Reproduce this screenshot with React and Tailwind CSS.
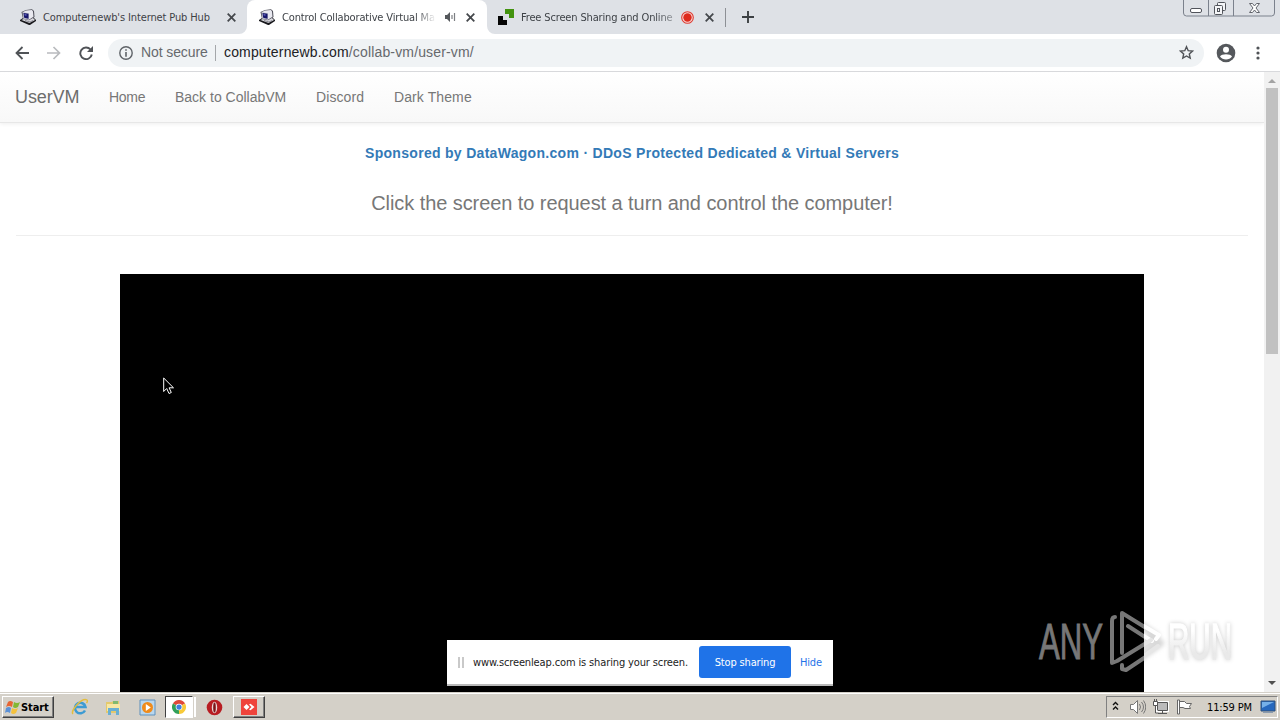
import React from "react";

const ui = "font-['DejaVu_Sans_Condensed','DejaVu_Sans',sans-serif]";

function PcIcon() {
  return (
    <svg className="h-4 w-4 shrink-0" viewBox="0 0 16 16">
      <path d="m0 11 3-2 10-1 3 3v1l-6 4h-1l-9-4Z" fill="#18181c" />
      <path d="m1.500 11 3-1.500L13 9l2 2-5.500 3Z" fill="#d9d9df" />
      <path d="m5 11.500 5 1.500 3-1.500" fill="none" stroke="#75757e" strokeWidth=".8" />
      <path d="M1.500 3 6 1l6-.8 2 1.800.5 6L9 11.300 3 10Z" fill="#4a4a55" />
      <path d="M2.500 3.200 6 1.500 12 1l1 1.500.5 5.200-4.300 2.800Z" fill="#e9e9f0" />
      <path d="m2.500 3.200 6.500 1V11L3.300 9.700Z" fill="#babac6" />
      <path d="m3.500 4 5 .8v5l-4.300-1Z" fill="#17176b" />
      <path d="m4.500 5 2 .3v1.500l-1.800-.3Z" fill="#6061bd" />
    </svg>
  );
}

function Close() {
  return (
    <svg className="h-[9px] w-[9px] shrink-0" viewBox="0 0 9 9" stroke="#45484c" strokeWidth="1.8">
      <path d="M.7.7 8.3 8.3M8.3.7.7 8.3" />
    </svg>
  );
}

function TabStrip() {
  return (
    <div className={`flex h-[34px] bg-[#dee1e6] text-[11px] text-[#3e4247] ${ui}`}>
      <div className="flex w-[247px] items-center pl-5">
        <PcIcon />
        <span className="mt-[2px] ml-[7px] w-[184px] whitespace-nowrap tracking-[-0.12px]">Computernewb's Internet Pub Hub</span>
        <Close />
      </div>
      <div className="relative flex w-[240px] items-center rounded-t-lg bg-white pl-3">
        <svg className="absolute bottom-0 -left-2 h-2 w-2" viewBox="0 0 8 8"><path d="M8 0v8H0a8 8 0 0 0 8-8" fill="#fff" /></svg>
        <svg className="absolute -right-2 bottom-0 h-2 w-2" viewBox="0 0 8 8"><path d="M0 0v8h8a8 8 0 0 1-8-8" fill="#fff" /></svg>
        <PcIcon />
        <span className="mt-[2px] ml-[7px] w-[154px] whitespace-nowrap tracking-[-0.15px] [mask-image:linear-gradient(to_right,#000_134px,transparent)]">Control Collaborative Virtual Ma</span>
        <svg className="ml-[9px] h-[10px] w-[11px]" viewBox="0 0 11 10">
          <path d="M0 3h2l3-3v10L2 7H0Z" fill="#55585c" />
          <path d="M7 3v4M9.500 1v8" stroke="#7c7f83" strokeWidth="1.200" />
        </svg>
        <span className="ml-[10px] flex"><Close /></span>
      </div>
      <div className="flex w-[240px] items-center pl-[11px]">
        <svg className="h-4 w-4" viewBox="0 0 16 16" shapeRendering="crispEdges">
          <path d="M7 0h9v9h-5V5H7Z" fill="#43930f" />
          <path d="M0 7h5v4h4v5H0Z" fill="#050505" />
        </svg>
        <span className="mt-[2px] ml-[7px] w-[154px] whitespace-nowrap tracking-[-0.15px] [mask-image:linear-gradient(to_right,#000_134px,transparent_165px)]">Free Screen Sharing and Online</span>
        <svg className="ml-[6px] h-[13px] w-[13px]" viewBox="0 0 13 13">
          <circle cx="6.5" cy="6.5" r="5.8" fill="#f8dddd" stroke="#de3b30" strokeWidth="1.1" />
          <circle cx="6.5" cy="6.5" r="4.2" fill="#de2a1c" />
        </svg>
        <span className="ml-[11px] flex"><Close /></span>
        <span className="ml-[11px] h-[19px] w-px bg-[#8d9095]" />
      </div>
      <svg className="mt-[11px] ml-[15px] h-3 w-3" viewBox="0 0 12 12"><path d="M6 0v12M0 6h12" stroke="#3c4043" strokeWidth="1.9" /></svg>
      <svg className="mr-[4px] ml-auto h-[17px] w-[94px]" viewBox="0 0 94 17" fill="none" stroke="#7b818c">
        <path d="M1.500-2v15a3 3 0 0 0 3 3h85a3 3 0 0 0 3-3V-2M26.500 0v16M51.500 0v16" />
        <rect x="8.500" y="8.500" width="11" height="4" rx="1.500" fill="#fff" stroke="#51545b" />
        <rect x="35.500" y="2.500" width="8" height="8" rx="1" fill="#f4f5f7" stroke="#51545b" />
        <rect x="32.500" y="5.500" width="8" height="9" rx="1" fill="#f4f5f7" stroke="#51545b" />
        <rect x="35.500" y="8.500" width="2" height="3" stroke="#51545b" />
        <path d="M67.500 3.500h3l2 2.500 2-2.500h3l-3.500 4.500 3.500 4.500h-3l-2-2.500-2 2.500h-3l3.500-4.500Z" fill="#fff" stroke="#62656c" />
      </svg>
    </div>
  );
}

function Toolbar() {
  return (
    <div className="flex h-[38px] items-center border-b border-[#d8d9dc] bg-white">
      <svg className="ml-[15px] h-[14px] w-[14px]" viewBox="0 0 14 14" fill="none" stroke="#505357" strokeWidth="1.8"><path d="M14 7H1.500M7.500 1 1.500 7l6 6" /></svg>
      <svg className="ml-[18px] h-[14px] w-[14px]" viewBox="0 0 14 14" fill="none" stroke="#b9bbbe" strokeWidth="1.7"><path d="M0 7h12.500M6.500 1l6 6-6 6" /></svg>
      <svg className="ml-[18px] h-[14px] w-[14px]" viewBox="0 0 14 14"><path d="M11.500 3.500A5.800 5.800 0 1 0 12.800 8.500" fill="none" stroke="#505357" strokeWidth="1.9" /><path d="M14 0v6H8Z" fill="#505357" /></svg>
      <div className="ml-[15px] flex h-7 w-[1096px] items-center rounded-full bg-[#f0f3f5] pl-[11px] font-['Liberation_Sans',Arial,sans-serif] text-[14px] text-[#66696d]">
        <svg className="h-[14px] w-[14px]" viewBox="0 0 14 14"><circle cx="7" cy="7" r="6.200" fill="none" stroke="#5f6368" strokeWidth="1.400" /><path d="M6.200 3.200h1.600v1.600H6.200zM6.200 6h1.600v4.800H6.200z" fill="#5f6368" /></svg>
        <span className="ml-[8px] w-[74px] whitespace-nowrap tracking-[-0.1px]">Not secure</span>
        <span className="h-[16px] w-px bg-[#a4a7aa]" />
        <span className="ml-[8px] whitespace-nowrap tracking-[0.16px]"><span className="text-[#202124]">computernewb.com</span>/collab-vm/user-vm/</span>
        <svg className="mr-[10px] ml-auto h-[15px] w-[15px]" viewBox="0 0 15 15"><path d="m7.500 1.700 1.700 4 4.300.4-3.200 2.900.9 4.200-3.700-2.200-3.700 2.200.9-4.200L1.500 6.100l4.300-.4Z" fill="none" stroke="#505357" strokeWidth="1.400" /></svg>
      </div>
      <svg className="ml-[12px] h-5 w-5" viewBox="0 0 20 20"><circle cx="10" cy="10" r="9.300" fill="#55585c" /><circle cx="10" cy="6.700" r="3" fill="#fff" /><path d="M4 13.500c1.500-3 10.500-3 12 0-2.500 4-9.500 4-12 0" fill="#fff" /></svg>
      <svg className="ml-[20px] h-[14px] w-[4px]" viewBox="0 0 4 14" fill="#505357"><circle cx="2" cy="2" r="1.600" /><circle cx="2" cy="7" r="1.600" /><circle cx="2" cy="12" r="1.600" /></svg>
    </div>
  );
}

function Page() {
  return (
    <div className="flex h-[620px]">
      <main className="flex w-[1264px] flex-col overflow-hidden bg-white font-['Liberation_Sans',Arial,sans-serif]">
        <nav className="flex h-[51px] shrink-0 items-center border-b border-[#e7e7e7] bg-linear-to-b from-white to-[#f8f8f8] pl-[15px] text-[14px] whitespace-nowrap text-[#777] shadow-[0_1px_4px_rgba(0,0,0,0.07)]">
          <span className="w-[94px] text-[18px] tracking-[-0.1px] text-[#6d6d6d]">UserVM</span>
          <span className="w-[66px] tracking-[-0.3px]">Home</span>
          <span className="w-[141px]">Back to CollabVM</span>
          <span className="w-[78px] tracking-[0.1px]">Discord</span>
          <span className="tracking-[0.1px]">Dark Theme</span>
        </nav>
        <div className="mt-[20px] h-5 text-center text-[14px] leading-5 font-bold tracking-[0.3px] text-[#337ab7]">Sponsored by DataWagon.com · DDoS Protected Dedicated &amp; Virtual Servers</div>
        <h1 className="mt-[28px] h-6 text-center text-[20px] leading-6 tracking-[-0.07px] text-[#777]">Click the screen to request a turn and control the computer!</h1>
        <div className="mx-[16px] mt-[20px] h-px shrink-0 bg-[#eee]" />
        <div className="mx-auto mt-[38px] h-[418px] w-[1024px] shrink-0 bg-black" />
      </main>
      <div className="flex w-4 flex-col items-center bg-[#f1f1f1]">
        <svg className="h-4 w-4 shrink-0" viewBox="0 0 16 16"><path d="M4 11h8L8 7Z" fill="#a3a3a3" /></svg>
        <div className="h-[266px] w-3 bg-[#c1c1c1]" />
        <svg className="mt-auto h-[17px] w-4 shrink-0" viewBox="0 0 16 17"><path d="M4 6h8l-4 4Z" fill="#505050" /></svg>
      </div>
    </div>
  );
}

function Taskbar() {
  return (
    <div className={`flex h-7 items-center border-t border-[#d4d0c8] bg-[#d4d0c8] pt-px shadow-[inset_0_1px_0_#fff] ${ui}`}>
      <div className="ml-[2px] flex h-[22px] w-[52px] items-center border border-t-white border-r-[#404040] border-b-[#404040] border-l-white pl-[2px] shadow-[inset_-1px_-1px_0_#808080]">
        <svg className="h-[15px] w-[15px]" viewBox="0 0 15 15">
          <path d="M3 2q2-2 5 0L7 7Q4 5 1 7Z" fill="#e76533" />
          <path d="M9 2q3 2 6 0l-2 5q-3 2-5 0Z" fill="#83b834" />
          <path d="M1 8q3-2 5 0l-1 5q-3-2-5 0Z" fill="#5b91d7" />
          <path d="M7 8q3 2 6 0l-2 5q-3 2-5 0Z" fill="#f4c13c" />
        </svg>
        <span className="mt-[2px] ml-[1px] text-[11px] font-bold tracking-[-0.1px] text-black">Start</span>
      </div>
      <svg className="ml-[17px] h-[18px] w-[18px]" viewBox="0 0 18 18">
        <path d="M14 12.500A5.300 5.300 0 1 1 14.500 9H4.500" fill="none" stroke="#3d9bd3" strokeWidth="2.500" />
        <path d="M2 16C-1 13 11-1 16 2q1 1-.5 3" fill="none" stroke="#e3bd3e" strokeWidth="1.400" />
      </svg>
      <svg className="ml-[16px] h-[17px] w-[17px]" viewBox="0 0 17 17">
        <path d="M1 3h6l1-1h6v12H1Z" fill="#e3c96d" /><path d="M2 5h13v7H2Z" fill="#f7e7a4" /><path d="M3 16V9h11v7h-3v-4H6v4Z" fill="#69afd3" /><path d="M8 2h5v3H8z" fill="#81b970" />
      </svg>
      <svg className="ml-[17px] h-[17px] w-[17px]" viewBox="0 0 17 17">
        <path d="M1 1h15v15H1Z" fill="#b9d7ee" stroke="#5f91bd" /><circle cx="8.500" cy="8.500" r="5.500" fill="#ef8b1b" /><path d="m6.800 5 5 3.500-5 3.500Z" fill="#fff" />
      </svg>
      <div className="ml-[9px] flex h-[22px] w-[28px] items-center justify-center border border-t-[#404040] border-r-white border-b-white border-l-[#404040] bg-white">
        <svg className="h-[14px] w-[14px]" viewBox="0 0 16 16">
          <path d="M8 8 1.070 4A8 8 0 0 1 14.930 4Z" fill="#df4939" /><path d="M8 8 14.930 4A8 8 0 0 1 8 16Z" fill="#f8ca38" /><path d="M8 8v8A8 8 0 0 1 1.070 4Z" fill="#32a05a" /><circle cx="8" cy="8" r="3.800" fill="#fff" /><circle cx="8" cy="8" r="3" fill="#3f7edf" />
        </svg>
      </div>
      <span className="ml-px h-5 w-[2px] bg-white" />
      <svg className="ml-[10px] h-[17px] w-[17px]" viewBox="0 0 17 17"><circle cx="8.500" cy="8.500" r="7.800" fill="#b81d22" /><ellipse cx="8.500" cy="8.500" rx="2.700" ry="5.800" fill="#e9d8d8" /><ellipse cx="8.500" cy="8.500" rx="1.300" ry="5" fill="#7c1417" /></svg>
      <div className="ml-[10px] flex h-[22px] w-[32px] items-center justify-center border border-t-white border-r-[#404040] border-b-[#404040] border-l-white shadow-[inset_-1px_-1px_0_#808080]">
        <svg className="h-4 w-4" viewBox="0 0 16 16"><path d="M0 0h16v16H0Z" fill="#ef443b" /><path d="m5.500 5 3 3-3 3-3-3Z" fill="#fff" /><path d="m8 5.500 1.500-.8L13.500 8l-4 3.300L8 10.500 10.500 8Z" fill="#fff" /></svg>
      </div>
      <div className="mr-[2px] ml-auto flex h-[22px] w-[172px] items-center border border-t-[#808080] border-r-white border-b-white border-l-[#808080] pl-[5px]">
        <svg className="-mt-[2px] h-[10px] w-[7px]" viewBox="0 0 7 10" fill="none" stroke="#111" strokeWidth="1.400"><path d="m1 4 2.500-2.500L6 4M1 8.500 3.500 6 6 8.500" /></svg>
        <svg className="ml-[10px] h-[16px] w-[17px]" viewBox="0 0 17 16" fill="none" stroke="#777"><path d="M1.500 5.500h3l4-4v13l-4-4h-3Z" fill="#fff" /><path d="M10.500 5q2 3 0 6M12.500 3q4 5 0 10M14.500 1.500q4.500 6.500 0 13" /></svg>
        <svg className="ml-[6px] h-[16px] w-[17px]" viewBox="0 0 17 16" fill="none" stroke="#555"><path d="M5.500 3.500h10v8h-10Z" fill="#b5b5b5" stroke="#fff" strokeWidth="3" /><path d="M5.500 3.500h10v8h-10ZM6 14.500h9M10.500 12v2" fill="#bbb" /><path d="M1.500 2.500h4v4h-4ZM2.500 0v2M4.500 0v2M3.500 7v7h3" fill="#fff" /></svg>
        <svg className="ml-[7px] h-[16px] w-[17px]" viewBox="0 0 17 16" fill="#fff" stroke="#666"><path d="M1.500 1v14h2V1ZM3.500 2.500h5l2 2h5l-2 3 1 2H9l-2-1H3.500Z" /></svg>
        <span className="mt-[2px] ml-[14px] w-[46px] text-[11px] tracking-[-0.15px] whitespace-nowrap text-black">11:59 PM</span>
        <svg className="ml-[7px] h-[14px] w-[16px]" viewBox="0 0 16 14"><path d="M1 1h14v10H1Z" fill="#2768bd" stroke="#315179" /><path d="M2 2h12L2 8Z" fill="#76b0e8" /><path d="M3 12h10v1H3Z" fill="#8c9caf" /></svg>
      </div>
    </div>
  );
}

export default function App() {
  return (
    <div className="relative h-[720px] w-[1280px] overflow-hidden bg-white">
      <TabStrip />
      <Toolbar />
      <Page />
      <Taskbar />
      <svg className="absolute top-[377px] left-[163px] h-[18px] w-[12px]" viewBox="0 0 12 18"><path d="M.7 1v13.500l3-3 2.300 5 2.300-1-2.200-4.700h4.400Z" fill="#000" stroke="#fff" /></svg>
      <div className={`absolute top-[640px] left-[447px] flex h-[46px] w-[386px] items-center border-b-2 border-[#b9b9b9] bg-white text-[11px] whitespace-nowrap ${ui}`}>
        <span className="ml-[11px] h-[11px] w-[6px] border-x-2 border-[#c9c9c9]" />
        <span className="mt-[2px] ml-[9px] w-[226px] tracking-[-0.13px] text-[#222]">www.screenleap.com is sharing your screen.</span>
        <span className="flex h-8 w-[92px] items-center justify-center rounded-[3px] bg-[#1f73e8] pt-[2px] tracking-[-0.15px] text-white">Stop sharing</span>
        <span className="mt-[2px] ml-[9px] tracking-[-0.2px] text-[#1f73e8]">Hide</span>
      </div>
      <svg className="absolute top-[605px] left-[1030px] h-[72px] w-[214px]" viewBox="0 0 214 72">
        <defs>
          <linearGradient id="fade" x1="0" y1="0" x2="0" y2="1"><stop offset="0.3" stopColor="#fff" /><stop offset="0.7" stopColor="#e9e9e9" /></linearGradient>
          <filter id="soft" x="-20%" y="-20%" width="140%" height="140%"><feGaussianBlur stdDeviation="2" /></filter>
          <clipPath id="dark"><path d="M0 0h114v72H0Z" /></clipPath>
          <clipPath id="light"><path d="M114 0h100v72H114Z" /></clipPath>
        </defs>
        <g clipPath="url(#dark)" fill="none" stroke="#777" strokeWidth="4" strokeLinejoin="round" strokeLinecap="round">
          <path d="M85 12q-3 0-3 4v42l5-2 34-21M92 48V8l29 18M98 21l20 13M92 60v4l4 1 30-20" />
        </g>
        <g clipPath="url(#light)" fill="none" strokeWidth="4" strokeLinejoin="round" strokeLinecap="round">
          <path d="M82 58 126 31 92 8M94 64l36-26" stroke="#d8d8d8" strokeWidth="8" filter="url(#soft)" />
          <path d="M92 8l37 22-3 4M98 21l24 15" stroke="#fff" />
          <path d="M87 56l34-21M94 65l34-24" stroke="#e6e6e6" />
        </g>
        <text x="9" y="54" fontFamily="Liberation Sans Narrow, sans-serif" fontSize="50" textLength="64" lengthAdjust="spacingAndGlyphs" fill="#777" stroke="#777" strokeWidth="1">ANY</text>
        <text x="138" y="54" fontFamily="Liberation Sans Narrow, sans-serif" fontSize="50" textLength="64" lengthAdjust="spacingAndGlyphs" fill="url(#fade)" stroke="url(#fade)" strokeWidth="1.500" className="[filter:drop-shadow(0_0_2px_#ccc)]">RUN</text>
      </svg>
    </div>
  );
}
